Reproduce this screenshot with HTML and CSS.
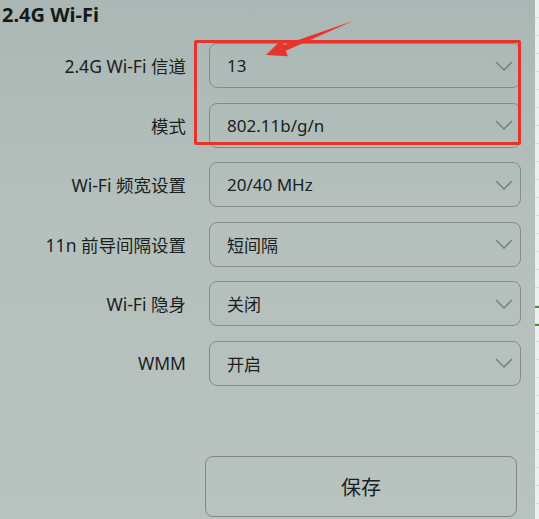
FILE: index.html
```html
<!DOCTYPE html>
<html lang="zh-CN">
<head>
<meta charset="utf-8">
<title>2.4G Wi-Fi</title>
<link rel="stylesheet" href="styles.css">
</head>
<body>
<div class="page">
  <div class="main">
    <h1 class="title">2.4G Wi-Fi</h1>
    <div class="form">
      <div class="row"><label class="label">2.4G Wi-Fi 信道</label><div class="select"><span>13</span><svg class="chev" viewBox="0 0 18 10"><path d="M1 1 L9 9 L17 1"/></svg></div></div>
      <div class="row"><label class="label">模式</label><div class="select"><span>802.11b/g/n</span><svg class="chev" viewBox="0 0 18 10"><path d="M1 1 L9 9 L17 1"/></svg></div></div>
      <div class="row"><label class="label">Wi-Fi 频宽设置</label><div class="select"><span>20/40 MHz</span><svg class="chev" viewBox="0 0 18 10"><path d="M1 1 L9 9 L17 1"/></svg></div></div>
      <div class="row"><label class="label">11n 前导间隔设置</label><div class="select"><span>短间隔</span><svg class="chev" viewBox="0 0 18 10"><path d="M1 1 L9 9 L17 1"/></svg></div></div>
      <div class="row"><label class="label">Wi-Fi 隐身</label><div class="select"><span>关闭</span><svg class="chev" viewBox="0 0 18 10"><path d="M1 1 L9 9 L17 1"/></svg></div></div>
      <div class="row"><label class="label">WMM</label><div class="select"><span>开启</span><svg class="chev" viewBox="0 0 18 10"><path d="M1 1 L9 9 L17 1"/></svg></div></div>
    </div>
    <button class="save">保存</button>
    <div class="highlight"></div>
    <svg class="arrow" viewBox="0 0 539 100" width="539" height="100"><polygon points="266,55 281.5,39.5 283.6,45.1 353,21 285.8,50.7 287.9,56.3"/></svg>
  </div>
  <div class="strip"></div>
</div>
</body>
</html>
```

FILE: styles.css
```css
html, body {
  margin: 0;
  padding: 0;
}
body {
  width: 539px;
  height: 519px;
  overflow: hidden;
  background: #b4bfbc;
  font-family: "Noto Sans", "Noto Sans CJK SC", sans-serif;
  color: #1b2120;
}
.page {
  display: flex;
  height: 519px;
}
.main {
  flex: 1;
  position: relative;
  background: linear-gradient(180deg, #abb7b4 0%, #b5c0bd 40%, #b8c3c0 100%);
}
.title {
  margin: 0;
  padding-left: 2px;
  font-size: 20px;
  font-weight: 700;
  line-height: 30px;
  color: #151a19;
}
.form {
  display: flex;
  flex-direction: column;
  gap: 14.6px;
  margin-top: 13px;
}
.row {
  display: flex;
  align-items: center;
  height: 45px;
}
.label {
  width: 186px;
  text-align: right;
  font-size: 17.5px;
  color: #1b2120;
}
.select {
  margin-left: 23px;
  width: 312px;
  height: 45px;
  box-sizing: border-box;
  border: 1.5px solid #848d8b;
  border-radius: 8px;
  display: flex;
  align-items: center;
  justify-content: space-between;
  padding: 0 7px 0 17px;
  font-size: 17px;
  color: #1b2120;
}
.chev {
  width: 18px;
  height: 10px;
  fill: none;
  stroke: #7a8481;
  stroke-width: 1.6;
}
.save {
  display: block;
  margin: 70px 0 0 205px;
  width: 312px;
  height: 61px;
  box-sizing: border-box;
  border: 1.5px solid #7f8886;
  border-radius: 8px;
  background: transparent;
  font-family: "Noto Sans CJK SC", sans-serif;
  font-size: 20px;
  color: #1b2120;
}
.highlight {
  position: absolute;
  left: 194px;
  top: 40px;
  width: 327px;
  height: 105px;
  box-sizing: border-box;
  border: 3px solid #e5352b;
  border-radius: 2px;
}
.arrow {
  position: absolute;
  left: 0;
  top: 0;
  fill: #e8342a;
}
.strip {
  width: 4px;
  background:
    linear-gradient(#4f8f2e, #4f8f2e) 0 306px / 4px 2px no-repeat,
    linear-gradient(#4f8f2e, #4f8f2e) 0 324px / 4px 2px no-repeat,
    repeating-linear-gradient(180deg, #eef0ef 0, #eef0ef 17px, #d4d8d7 17px, #d4d8d7 18px);
}
```
